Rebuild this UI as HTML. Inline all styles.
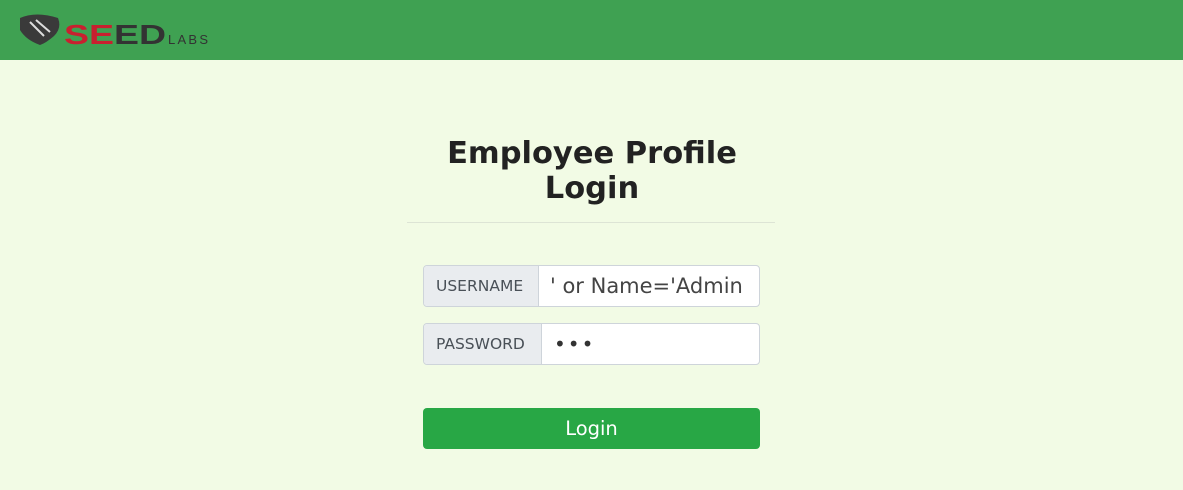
<!DOCTYPE html>
<html><head><style>
*{box-sizing:border-box;margin:0;padding:0}
body{width:1183px;height:490px;background:#f2fbe5;font-family:"DejaVu Sans","Liberation Sans",sans-serif;position:relative;overflow:hidden}
.hdr{position:absolute;left:0;top:0;width:1183px;height:60px;background:#3fa152}
.t{position:absolute;left:342px;width:500px;text-align:center;font-weight:bold;font-size:30.5px;color:#222;line-height:35px;top:136px}
.hr{position:absolute;left:407px;top:222px;width:368px;height:1px;background:#dde4d5}
.grp{position:absolute;left:423px;width:337px;height:42px;border:1px solid #ced4da;border-radius:4px;background:#fff;overflow:hidden}
.lab{position:absolute;left:0;top:0;bottom:0;background:#e9ecef;border-right:1px solid #ced4da;font-size:15.5px;color:#495057;display:flex;align-items:center;padding-left:12px}
.val{position:absolute;top:0;bottom:0;display:flex;align-items:center;font-size:21px;color:#444}
.btn{position:absolute;left:423px;top:408px;width:337px;height:41px;background:#28a745;border-radius:4px;color:#fff;font-size:19.5px;display:flex;align-items:center;justify-content:center}
</style></head><body>
<div class="hdr">
<svg width="210" height="40" style="position:absolute;left:16px;top:12px" viewBox="0 0 210 40">
<path d="M4 6 Q20 -1 42 6 Q46 16 38 24 Q30 31 24 33 Q10 28 4 18Z" fill="#3a3a3a"/>
<path d="M14 10 L28 24 M20 8 L34 20" stroke="#ddd" stroke-width="2"/>
<text x="48" y="32" font-family="Liberation Sans" font-weight="900" font-size="28" fill="#c8202f" textLength="50" lengthAdjust="spacingAndGlyphs">SE</text>
<text x="98" y="32" font-family="Liberation Sans" font-weight="900" font-size="28" fill="#333" textLength="52" lengthAdjust="spacingAndGlyphs">ED</text>
<text x="152" y="32" font-family="Liberation Sans" font-size="13" fill="#333" textLength="40" lengthAdjust="spacing">LABS</text>
</svg>
</div>
<div class="t">Employee Profile<br>Login</div>
<div class="hr"></div>
<div class="grp" style="top:265px"><div class="lab" style="width:115px">USERNAME</div><div class="val" style="left:126px">' or Name='Admin</div></div>
<div class="grp" style="top:323px"><div class="lab" style="width:118px">PASSWORD</div><div class="val" style="left:130px;font-size:20px;letter-spacing:2px;color:#333">•••</div></div>
<div class="btn">Login</div>
</body></html>
